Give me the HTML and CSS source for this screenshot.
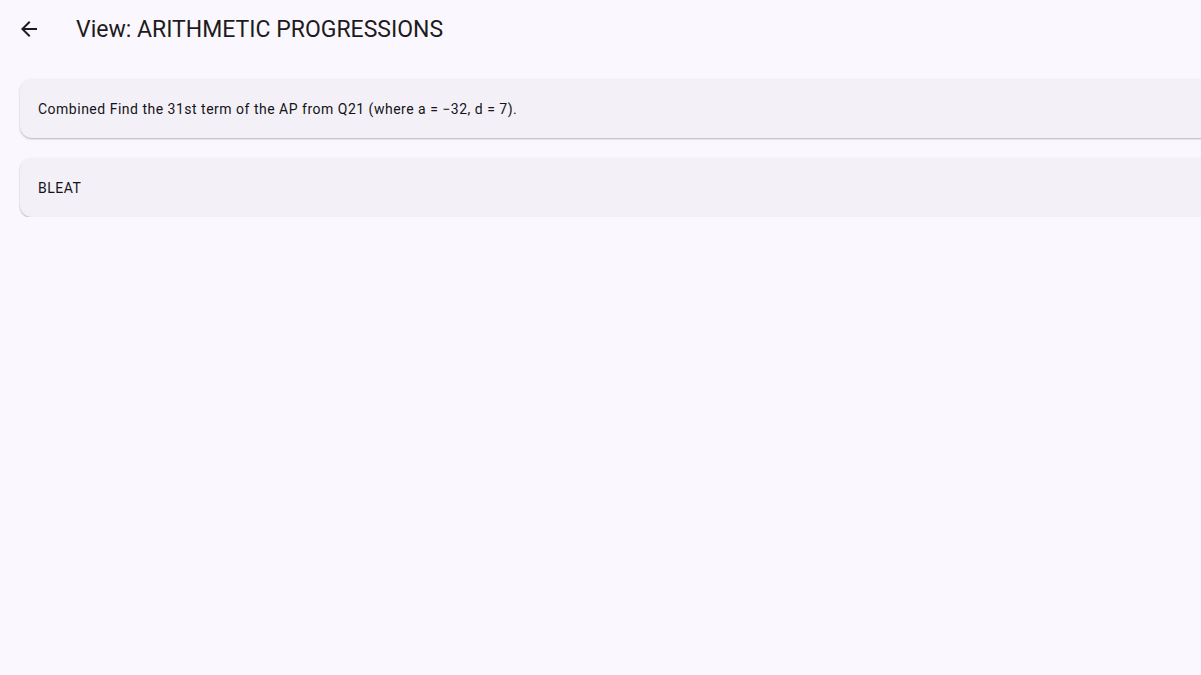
FILE: index.html
```html
<!DOCTYPE html>
<html lang="en">
<head>
  <meta charset="UTF-8">
  <meta name="viewport" content="width=device-width, initial-scale=1.0">
  <title>View: ARITHMETIC PROGRESSIONS</title>
  <link rel="stylesheet" href="styles.css">
</head>
<body>
  <header class="app-bar">
    <button class="back-button" aria-label="Back">
      <svg viewBox="0 0 24 24" width="24" height="24">
        <path d="M20 11H7.83l5.59-5.59L12 4l-8 8 8 8 1.41-1.41L7.83 13H20v-2z"/>
      </svg>
    </button>
    <h1 class="app-title">View: ARITHMETIC PROGRESSIONS</h1>
  </header>

  <main class="question-list">
    <div class="question-card">Combined Find the 31st term of the AP from Q21 (where a = −32, d = 7).</div>
    <div class="question-card">BLEAT</div>
  </main>
</body>
</html>
```

FILE: styles.css
```css
/* Page */
body {
  margin: 0;
  font-family: 'Roboto', 'Liberation Sans', sans-serif;
  background: #faf8fe;
  color: #1d1b20;
  overflow: hidden;
}

/* Top bar */
.app-bar {
  height: 58px;
  display: flex;
  align-items: center;
  padding-left: 17px;
}

.back-button {
  width: 24px;
  height: 24px;
  padding: 0;
  border: none;
  background: none;
  cursor: pointer;
  display: flex;
}

.back-button svg {
  fill: #1d1b20;
}

.app-title {
  margin: 0 0 0 35px;
  font-size: 23px;
  font-weight: 400;
  letter-spacing: 0;
}

/* Question cards */
.question-list {
  display: flex;
  flex-direction: column;
  gap: 20px;
  padding: 21px 0 0 20px;
  margin-right: -40px;
}

.question-card {
  height: 59px;
  display: flex;
  align-items: center;
  padding: 1px 0 0 18px;
  box-sizing: border-box;
  background: #f3f1f7;
  border-radius: 12px;
  box-shadow: 0 1px 2px rgba(0, 0, 0, 0.28);
  font-size: 14px;
  font-weight: 400;
  letter-spacing: 0.5px;
  color: #151318;
}
```
